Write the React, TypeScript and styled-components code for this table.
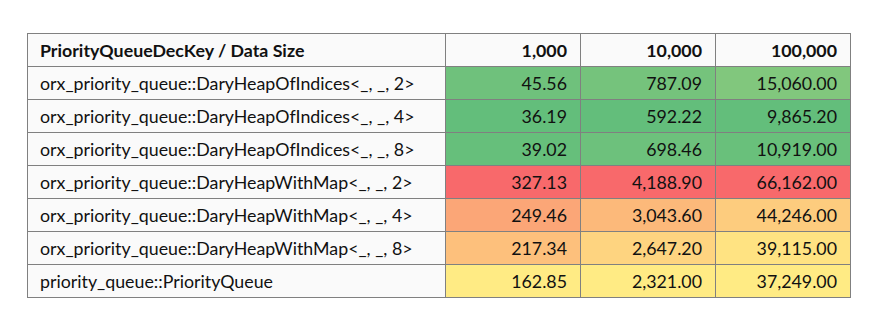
import React from 'react';
import styled, { createGlobalStyle } from 'styled-components';

type Row = {
  name: string;
  values: number[];
};

const rows: Row[] = [
  { name: 'orx_priority_queue::DaryHeapOfIndices<_, _, 2>', values: [45.56, 787.09, 15060.0] },
  { name: 'orx_priority_queue::DaryHeapOfIndices<_, _, 4>', values: [36.19, 592.22, 9865.2] },
  { name: 'orx_priority_queue::DaryHeapOfIndices<_, _, 8>', values: [39.02, 698.46, 10919.0] },
  { name: 'orx_priority_queue::DaryHeapWithMap<_, _, 2>', values: [327.13, 4188.9, 66162.0] },
  { name: 'orx_priority_queue::DaryHeapWithMap<_, _, 4>', values: [249.46, 3043.6, 44246.0] },
  { name: 'orx_priority_queue::DaryHeapWithMap<_, _, 8>', values: [217.34, 2647.2, 39115.0] },
  { name: 'priority_queue::PriorityQueue', values: [162.85, 2321.0, 37249.0] },
];

const sizes = ['1,000', '10,000', '100,000'];

// excel-ish 3 colour scale: min green, median yellow, max red
const GREEN = [99, 190, 123];
const YELLOW = [255, 235, 132];
const RED = [248, 105, 107];

const mix = (a: number[], b: number[], t: number) =>
  `rgb(${a.map((v, i) => Math.round(v + (b[i] - v) * t)).join(',')})`;

const scaleColor = (value: number, column: number[]) => {
  const sorted = [...column].sort((a, b) => a - b);
  const min = sorted[0];
  const max = sorted[sorted.length - 1];
  const mid = sorted[Math.floor(sorted.length / 2)];
  if (value <= mid) return mix(GREEN, YELLOW, (value - min) / (mid - min));
  return mix(YELLOW, RED, (value - mid) / (max - mid));
};

const fmt = (n: number) =>
  n.toLocaleString('en-US', { minimumFractionDigits: 2, maximumFractionDigits: 2 });

const App = () => {
  const columns = sizes.map((_, c) => rows.map((r) => r.values[c]));
  return (
    <>
      <GlobalStyle />
      <Page>
        <Table>
          <colgroup>
            <Col $width={418} />
            {sizes.map((s) => (
              <Col key={s} $width={135} />
            ))}
          </colgroup>
          <thead>
            <tr>
              <HeadCell>PriorityQueueDecKey / Data Size</HeadCell>
              {sizes.map((s) => (
                <HeadCell key={s} $numeric>
                  {s}
                </HeadCell>
              ))}
            </tr>
          </thead>
          <tbody>
            {rows.map((row) => (
              <tr key={row.name}>
                <LabelCell>{row.name}</LabelCell>
                {row.values.map((v, c) => (
                  <ValueCell key={c} $bg={scaleColor(v, columns[c])}>
                    {fmt(v)}
                  </ValueCell>
                ))}
              </tr>
            ))}
          </tbody>
        </Table>
      </Page>
    </>
  );
};
export default App;

const GlobalStyle = createGlobalStyle`
  body {
    margin: 0;
    background: #ffffff;
    font-family: Lato, 'Liberation Sans', sans-serif;
  }
`;

export const Page = styled.div`
  padding: 33px 0 0 27px;
`;

export const Table = styled.table`
  border-collapse: collapse;
  table-layout: fixed;
  font-size: 17.8px;
  color: #111111;

  td,
  th {
    border: 1px solid #808080;
    height: 33px;
    padding: 0 13px 0 12px;
    box-sizing: border-box;
    white-space: nowrap;
  }
`;

export const Col = styled.col<{ $width: number }>`
  width: ${(p) => p.$width}px;
`;

export const HeadCell = styled.th<{ $numeric?: boolean }>`
  background: #fafafa;
  font-weight: 700;
  text-align: ${(p) => (p.$numeric ? 'right' : 'left')};
`;

export const LabelCell = styled.td`
  background: #fafafa;
  text-align: left;
`;

export const ValueCell = styled.td<{ $bg: string }>`
  background: ${(p) => p.$bg};
  text-align: right;
`;
